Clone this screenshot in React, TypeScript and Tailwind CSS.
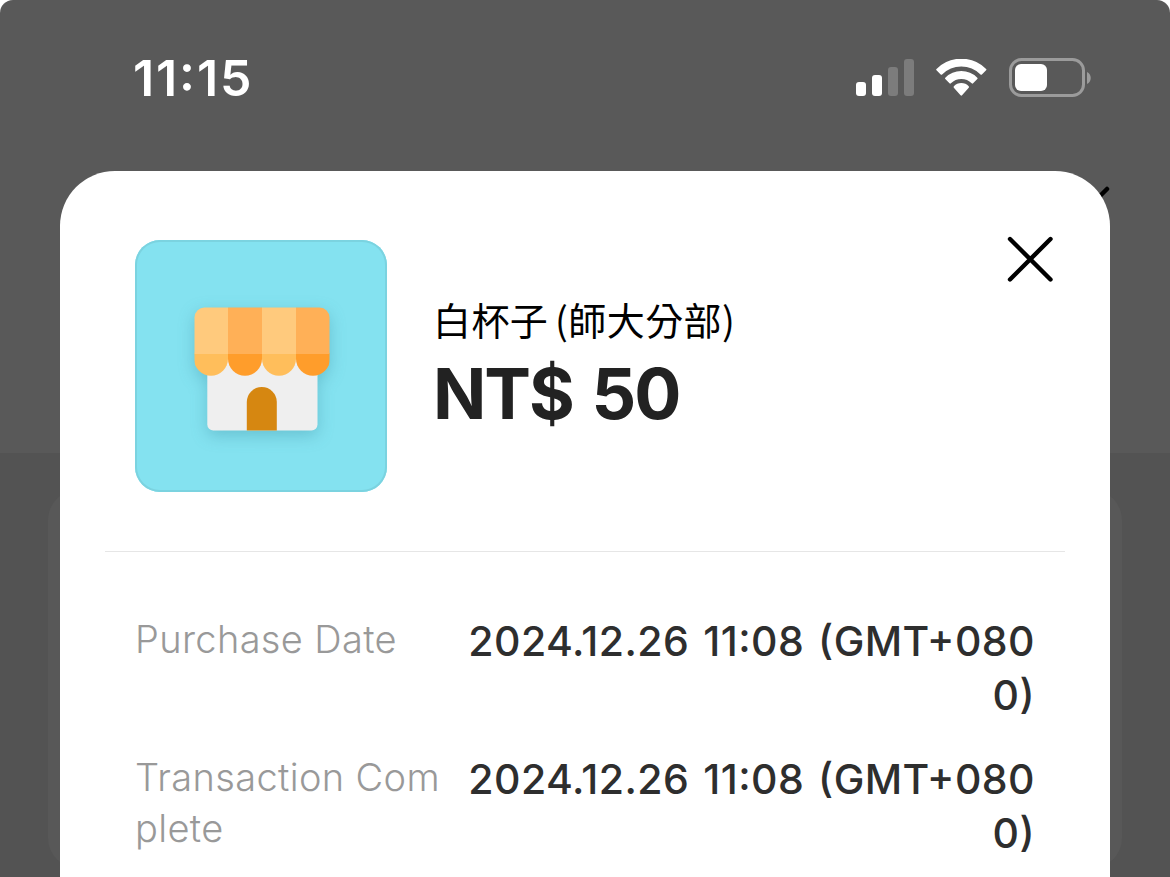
interface DetailRow {
  label: string;
  value: string;
}

const rows: DetailRow[] = [
  { label: 'Purchase Date', value: '2024.12.26 11:08 (GMT+0800)' },
  { label: 'Transaction Complete', value: '2024.12.26 11:08 (GMT+0800)' },
];

function SignalIcon() {
  return (
    <svg width="58" height="38" viewBox="0 0 58 38" fill="#fff">
      <rect x="0" y="23" width="10" height="14" rx="3" />
      <rect x="16" y="16" width="10" height="21" rx="3" />
      <rect x="32" y="8" width="10" height="29" rx="3" fill="#7c7c7c" />
      <rect x="48" y="0" width="10" height="37" rx="3" fill="#7c7c7c" />
    </svg>
  );
}

function WifiIcon() {
  return (
    <svg width="52" height="38" viewBox="0 0 52 38" fill="#fff" stroke="#fff" strokeWidth="2" strokeLinejoin="round">
      <path d="M2.2 10.6 A34.2 34.2 0 0 1 50.4 10.6 L46.2 14.8 A28.2 28.2 0 0 0 6.4 14.8 Z" />
      <path d="M11 19.4 A21.6 21.6 0 0 1 41.6 19.4 L37.4 23.6 A15.6 15.6 0 0 0 15.2 23.6 Z" />
      <path d="M19.6 28 A9.2 9.2 0 0 1 33 28 L26.3 35.6 Z" />
    </svg>
  );
}

function BatteryIcon() {
  return (
    <svg width="83" height="40" viewBox="0 0 83 40">
      <rect x="1.5" y="1.5" width="73" height="36" rx="11" fill="none" stroke="#9b9b9b" strokeWidth="3" />
      <rect x="6" y="6" width="32" height="27" rx="6" fill="#fff" />
      <path d="M78 14 C83 16 83 24 78 26 Z" fill="#9b9b9b" />
    </svg>
  );
}

function StoreIcon() {
  const stripes = [
    { x: 59, top: '#ffca7d', bottom: '#ffbe5b' },
    { x: 93, top: '#ffb057', bottom: '#ff9d2b' },
    { x: 127, top: '#ffca7d', bottom: '#ffbe5b' },
    { x: 161, top: '#ffb057', bottom: '#ff9d2b' },
  ];

  return (
    <svg width="252" height="252" viewBox="0 0 252 252">
      <clipPath id="awning">
        <rect x="59.5" y="67.5" width="135" height="80" rx="10" />
      </clipPath>
      <g style={{ filter: 'drop-shadow(0 5px 8px rgba(40, 120, 140, 0.3)) blur(0.7px)' }}>
        <path d="M72.3 110 H182.5 V184.5 A6 6 0 0 1 176.5 190.5 H78.3 A6 6 0 0 1 72.3 184.5 Z" fill="#efefef" />
        <path d="M111.8 190.5 V162 A15 15 0 0 1 141.8 162 V190.5 Z" fill="#d68711" />
        <g clipPath="url(#awning)">
          {stripes.map((s) => (
            <g key={s.x}>
              <path d={`M${s.x} 113 h34 v5.7 a17 17 0 0 1 -34 0 Z`} fill={s.bottom} />
              <rect x={s.x} y="67" width="34" height="47" fill={s.top} />
            </g>
          ))}
        </g>
      </g>
    </svg>
  );
}

// The page that stays dimmed behind the sheet
function Backdrop() {
  return (
    <div className="absolute inset-0 flex flex-col overflow-hidden rounded-t-[13px] bg-[#595959]">
      <div className="flex h-[453px] justify-end pt-[184px] pr-[60px]">
        <svg width="48" height="48" viewBox="0 0 48 48" stroke="#000" strokeWidth="4.5" strokeLinecap="round">
          <path d="M5 5 L45 45 M5 45 L45 5" />
        </svg>
      </div>
      <div className="flex-1 bg-[#535353] px-12 pt-[37px]">
        <div className="h-[378px] rounded-[30px] bg-[#585858]"></div>
      </div>
    </div>
  );
}

function StatusBar() {
  return (
    <div className="flex h-[171px] items-start justify-between pt-[58px] pr-[78px] pl-[133px]">
      <span className="mt-[-10px] text-[50px] leading-[60px] font-semibold tracking-[1.9px] text-white [font-feature-settings:'calt'_1]">
        11:15
      </span>
      <div className="flex items-start">
        <div className="pt-px">
          <SignalIcon />
        </div>
        <div className="ml-[21px] pt-px">
          <WifiIcon />
        </div>
        <div className="ml-[22px]">
          <BatteryIcon />
        </div>
      </div>
    </div>
  );
}

export default function App() {
  return (
    <div className="relative h-[877px] w-[1170px] overflow-hidden bg-white font-['Inter','Noto_Sans_CJK_TC',sans-serif]">
      <Backdrop />
      <div className="relative flex h-full flex-col">
        <StatusBar />
        <main className="mx-[60px] flex-1 rounded-t-[55px] bg-white px-[45px]">
          <header className="flex h-[380px] items-start pt-[69px] pl-[30px]">
            <div className="size-[252px] shrink-0 overflow-hidden rounded-[25px] bg-[#84e2f0] inset-ring-2 inset-ring-[#7bd3e0]">
              <StoreIcon />
            </div>
            <div className="flex-1 pt-[51px] pl-[46px]">
              <h1 className="font-['Noto_Sans_CJK_TC',sans-serif] text-[38px] leading-[56px] tracking-[0.4px] [word-spacing:-2px] whitespace-nowrap text-black">
                白杯子 (師大分部)
              </h1>
              <p className="mt-[3px] text-[70px] leading-[88px] font-bold tracking-[-2px] [word-spacing:4px] whitespace-nowrap text-[#222]">
                NT$ 50
              </p>
            </div>
            <button className="mt-[-6px] mr-[10px]" aria-label="Close">
              <svg width="50" height="50" viewBox="0 0 50 50" stroke="#000" strokeWidth="4.4" strokeLinecap="round">
                <path d="M5 5 L45.5 45.5 M5 45.5 L45.5 5" />
              </svg>
            </button>
          </header>
          <div className="h-px bg-[#e6e6e6]"></div>
          <dl className="flex flex-col gap-[30px] pt-[62px] pr-[30px] pl-[30px]">
            {rows.map((row) => (
              <div key={row.label} className="flex h-[108px] justify-between">
                <dt className="w-[308px] text-[38px] leading-[51px] font-light tracking-[0.35px] break-all text-[#999]">
                  {row.label}
                </dt>
                <dd className="w-[572px] text-right text-[41px] leading-[54px] font-medium tracking-[0.45px] [word-spacing:2.5px] break-all text-[#2e2e2e] [font-feature-settings:'calt'_1]">
                  {row.value}
                </dd>
              </div>
            ))}
          </dl>
        </main>
      </div>
    </div>
  );
}
